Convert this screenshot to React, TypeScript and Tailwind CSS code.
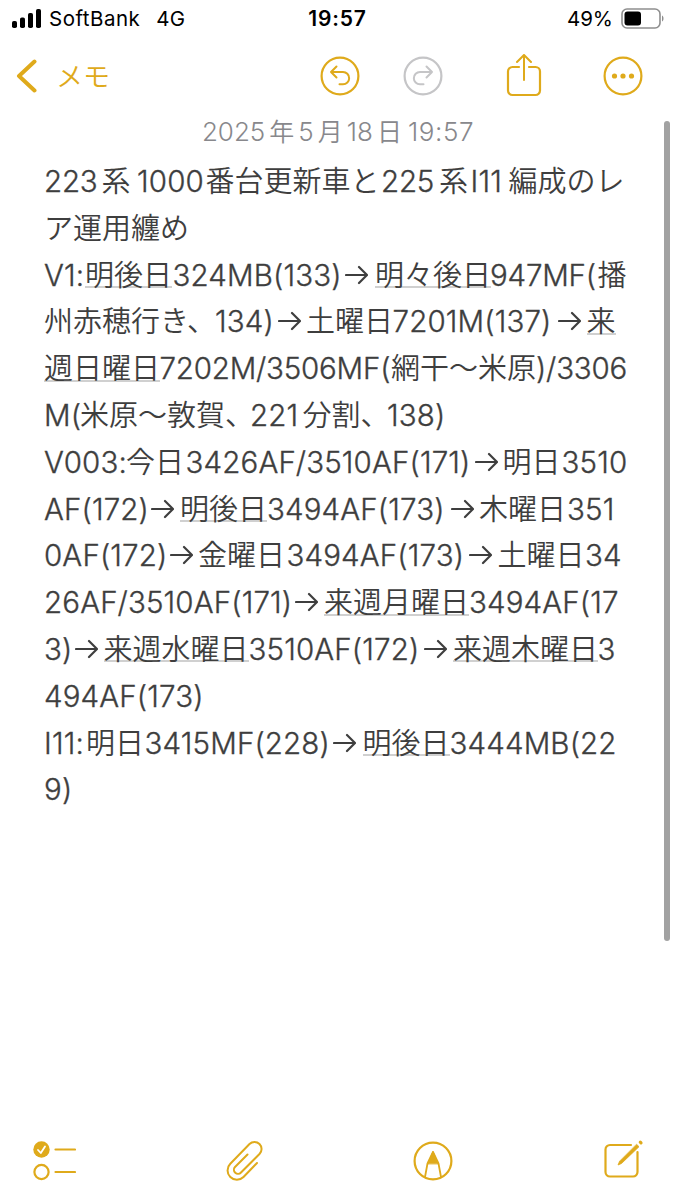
import type { ReactNode } from "react";

// x is where the run begins, measured from the left edge of the screen
type Run = { x: number; text: string; link?: boolean; tight?: boolean };

const NOTE_LINES: Run[][] = [
  [
    { x: 44, text: "223", tight: true },
    { x: 101.5, text: "系" },
    { x: 137, text: "1000" },
    { x: 205.5, text: "番台更新車と" },
    { x: 381, text: "225", tight: true },
    { x: 439, text: "系" },
    { x: 470.5, text: "I11" },
    { x: 508.5, text: "編成のレ" },
  ],
  [{ x: 43, text: "ア運用纏め" }],
  [
    { x: 44, text: "V1:" },
    { x: 85, text: "明後日", link: true },
    { x: 172.5, text: "324MB(133)" },
    { x: 345, text: "→" },
    { x: 375, text: "明々後日", link: true },
    { x: 490, text: "947MF(", tight: true },
    { x: 597.5, text: "播" },
  ],
  [
    { x: 43, text: "州赤穂行き、" },
    { x: 214, text: "134)" },
    { x: 277, text: "→" },
    { x: 305, text: "土曜日" },
    { x: 391.5, text: "7201M(137)" },
    { x: 557, text: "→" },
    { x: 585.5, text: "来", link: true },
  ],
  [
    { x: 43.5, text: "週日曜日", link: true },
    { x: 159, text: "7202M/3506MF(", tight: true },
    { x: 390.5, text: "網干〜米原" },
    { x: 535.5, text: ")/3306", tight: true },
  ],
  [
    { x: 44, text: "M(" },
    { x: 80, text: "米原〜敦賀、" },
    { x: 250, text: "221" },
    { x: 302.5, text: "分割、" },
    { x: 387, text: "138)" },
  ],
  [
    { x: 44, text: "V003:" },
    { x: 126, text: "今日" },
    { x: 185.5, text: "3426AF/3510AF(171)" },
    { x: 474.5, text: "→" },
    { x: 502.5, text: "明日" },
    { x: 561.5, text: "3510" },
  ],
  [
    { x: 44, text: "AF(172)" },
    { x: 151, text: "→" },
    { x: 180, text: "明後日", link: true },
    { x: 267, text: "3494AF(173)" },
    { x: 451, text: "→" },
    { x: 479, text: "木曜日" },
    { x: 567, text: "351" },
  ],
  [
    { x: 44, text: "0AF(172)" },
    { x: 169.5, text: "→" },
    { x: 198, text: "金曜日" },
    { x: 286.5, text: "3494AF(173)" },
    { x: 468.5, text: "→" },
    { x: 497.5, text: "土曜日" },
    { x: 585, text: "34" },
  ],
  [
    { x: 44, text: "26AF/3510AF(171)" },
    { x: 295, text: "→" },
    { x: 324, text: "来週月曜日", link: true },
    { x: 469, text: "3494AF(17" },
  ],
  [
    { x: 44, text: "3)" },
    { x: 75, text: "→" },
    { x: 103.5, text: "来週水曜日", link: true },
    { x: 248.5, text: "3510AF(172)" },
    { x: 423.5, text: "→" },
    { x: 453, text: "来週木曜日", link: true },
    { x: 597.5, text: "3" },
  ],
  [{ x: 44, text: "494AF(173)" }],
  [
    { x: 44, text: "I11:" },
    { x: 86, text: "明日" },
    { x: 144.5, text: "3415MF(228)" },
    { x: 333, text: "→" },
    { x: 362.5, text: "明後日", link: true },
    { x: 449.5, text: "3444MB(22" },
  ],
  [{ x: 44, text: "9)" }],
];

const LATIN = /^[\x20-\x7e]+$/;

function RunText({ run }: { run: Run }) {
  if (run.link) {
    return (
      <span className="inline-block h-[36.5px] border-b-2 border-[#d0d0d0] font-['Noto_Sans_CJK_JP',sans-serif] text-[29px] leading-[43px] font-[350]">
        {run.text}
      </span>
    );
  }
  if (run.text === "→") {
    return (
      <svg className="h-[46px] w-[23px]" viewBox="0 0 23 46" fill="none" stroke="currentColor" strokeWidth="2.2">
        <path d="M1 23H21.5M14 15L22 23L14 31" strokeLinecap="round" strokeLinejoin="round" />
      </svg>
    );
  }
  if (LATIN.test(run.text)) {
    return (
      <span
        className={`font-[Inter,sans-serif] text-[29.5px] leading-[46px] font-[350] [-webkit-text-stroke:0.35px_#3e3e3e] ${
          run.tight ? "tracking-[-0.2px]" : "tracking-[0.15px]"
        }`}
      >
        {run.text}
      </span>
    );
  }
  return <span className="font-['Noto_Sans_CJK_JP',sans-serif] text-[29px] leading-[43px] font-[350]">{run.text}</span>;
}

function NoteLine({ line }: { line: Run[] }) {
  return (
    <div className="flex h-[46.8px] items-start whitespace-nowrap">
      {line.map((run, i) => {
        const next = line[i + 1];
        return (
          <div key={i} className="flex shrink-0" style={{ width: next ? next.x - run.x : undefined }}>
            <RunText run={run} />
          </div>
        );
      })}
    </div>
  );
}

function StatusBar() {
  return (
    <div className="grid h-[37px] grid-cols-3 items-center pr-[10px] pl-[12px] font-[Inter,sans-serif] text-[20.5px] text-black">
      <div className="flex items-center whitespace-nowrap">
        <svg width="30" height="19" viewBox="0 0 30 19" fill="currentColor">
          <rect x="0" y="12" width="5" height="7" rx="1.8" />
          <rect x="8" y="8.5" width="5" height="10.5" rx="1.8" />
          <rect x="16" y="4" width="5" height="15" rx="1.8" />
          <rect x="24" y="0" width="5" height="19" rx="1.8" />
        </svg>
        <span className="ml-[7px] pt-px tracking-[0.5px]">SoftBank</span>
        <span className="ml-[16px] pt-px tracking-[0.2px]">4G</span>
      </div>
      <div className="pr-[2px] text-center text-[21px] font-semibold tracking-[0.8px]">19:57</div>
      <div className="flex items-center justify-end">
        <span className="pt-px">49%</span>
        <svg className="ml-2" width="44" height="22" viewBox="0 0 44 22">
          <rect x="1" y="1" width="38" height="19" rx="5" fill="none" stroke="#8e8e8e" strokeWidth="1.6" />
          <rect x="3.5" y="3.5" width="16.5" height="14" rx="3" fill="#000" />
          <path d="M41 7.5c2 .8 2 5.2 0 6z" fill="#8e8e8e" />
        </svg>
      </div>
    </div>
  );
}

function Icon({ className = "", children }: { className?: string; children: ReactNode }) {
  return (
    <svg
      className={`size-11 shrink-0 ${className}`}
      viewBox="0 0 44 44"
      fill="none"
      stroke="currentColor"
      strokeWidth="2.2"
      strokeLinecap="round"
      strokeLinejoin="round"
    >
      {children}
    </svg>
  );
}

function NavBar() {
  return (
    <div className="flex h-[78px] items-center pl-[15px]">
      <svg className="h-[36px] w-[22px]" viewBox="0 0 22 36" fill="none" stroke="currentColor" strokeWidth="4">
        <path d="M19.5 3.5L4 18L19.5 32.5" strokeLinecap="round" strokeLinejoin="round" />
      </svg>
      <span className="ml-[19px] w-[262px] font-['Noto_Sans_CJK_JP',sans-serif] text-[27px] leading-10 font-[350]">メモ</span>
      <Icon>
        <circle cx="22" cy="22" r="18.4" />
        <path d="M18.5 12.5L13 18L18.5 23.5M13 18H25a6 6 0 0 1 0 12.3H21.5" strokeWidth="2" />
      </Icon>
      <Icon className="ml-[39px] text-[#c5c5c7]">
        <circle cx="22" cy="22" r="18.4" />
        <path d="M25.5 12.5L31 18L25.5 23.5M31 18H19a6 6 0 0 0 0 12.3H22.5" strokeWidth="2" />
      </Icon>
      <Icon className="ml-[57px]">
        <path d="M17 13H10.5a4.5 4.5 0 0 0-4.5 4.5V36.5a4.5 4.5 0 0 0 4.5 4.5H33.5a4.5 4.5 0 0 0 4.5-4.5V17.5a4.5 4.5 0 0 0-4.5-4.5H27" />
        <path d="M22 26V1.5M15 8L22 1L29 8" strokeWidth="2" />
      </Icon>
      <Icon className="ml-[55px]">
        <circle cx="22" cy="22" r="18.4" />
        <g fill="currentColor" stroke="none">
          <circle cx="13.5" cy="22" r="2.6" />
          <circle cx="22" cy="22" r="2.6" />
          <circle cx="30.5" cy="22" r="2.6" />
        </g>
      </Icon>
    </div>
  );
}

function Toolbar() {
  return (
    <div className="flex h-[78px] items-center justify-between pr-[30px] pl-[32px]">
      <Icon>
        <circle cx="9.5" cy="10.5" r="8.2" fill="currentColor" stroke="none" />
        <path d="M6 11L8.8 14L13 7.5" stroke="#fff" strokeWidth="1.8" />
        <circle cx="9.5" cy="33" r="7.1" />
        <path d="M23.5 10.5H43M23.5 33H43" />
      </Icon>
      <Icon>
        <path
          d="M35 24L21.5 38a9.2 9.2 0 0 1-13.2-13.2L27.5 5a7 7 0 0 1 10 10L19 33.5a4 4 0 0 1-6-5.5L25.5 15.5"
          strokeWidth="2"
        />
      </Icon>
      <Icon>
        <circle cx="22" cy="22" r="18.4" />
        <path d="M14 38L16.5 24.5L22 13L27.5 24.5L30 38" strokeWidth="1.8" />
        <path d="M17 24.5L22 12.5L27 24.5Z" fill="currentColor" strokeWidth="1" />
      </Icon>
      <Icon>
        <path d="M30 6H9a4.5 4.5 0 0 0-4.5 4.5V33a4.5 4.5 0 0 0 4.5 4.5H32A4.5 4.5 0 0 0 36.500 33V13" />
        <path d="M35.8 5.5L38 7.7L20.5 24.5L17 26L18.5 22.5Z" fill="currentColor" strokeWidth="0.8" />
        <path d="M39.3 3.2L40 3.9" strokeWidth="3.2" />
      </Icon>
    </div>
  );
}

export default function App() {
  return (
    <div lang="ja" className="flex h-[1200px] w-[675px] flex-col overflow-hidden bg-white text-[#dfaa1b]">
      <StatusBar />
      <NavBar />
      <main className="flex min-h-0 flex-1 justify-between pr-[5px] pl-[44px]">
        <div className="w-[588px] text-[#3e3e3e]">
          <div className="flex h-[43px] justify-center gap-[4px] font-[Inter,'Noto_Sans_CJK_JP',sans-serif] text-[26px] leading-[34px] font-[350] text-[#88888c]">
            <span>2025</span>
            <span className="text-[25px]">年</span>
            <span>5</span>
            <span className="text-[25px]">月</span>
            <span>18</span>
            <span className="text-[25px]">日</span>
            <span className="ml-[2px] tracking-[0.6px]">19:57</span>
          </div>
          {NOTE_LINES.map((line, i) => (
            <NoteLine key={i} line={line} />
          ))}
        </div>
        <div className="mt-[6px] h-[820px] w-[6px] rounded-full bg-[#a2a2a2]" />
      </main>
      <Toolbar />
    </div>
  );
}
